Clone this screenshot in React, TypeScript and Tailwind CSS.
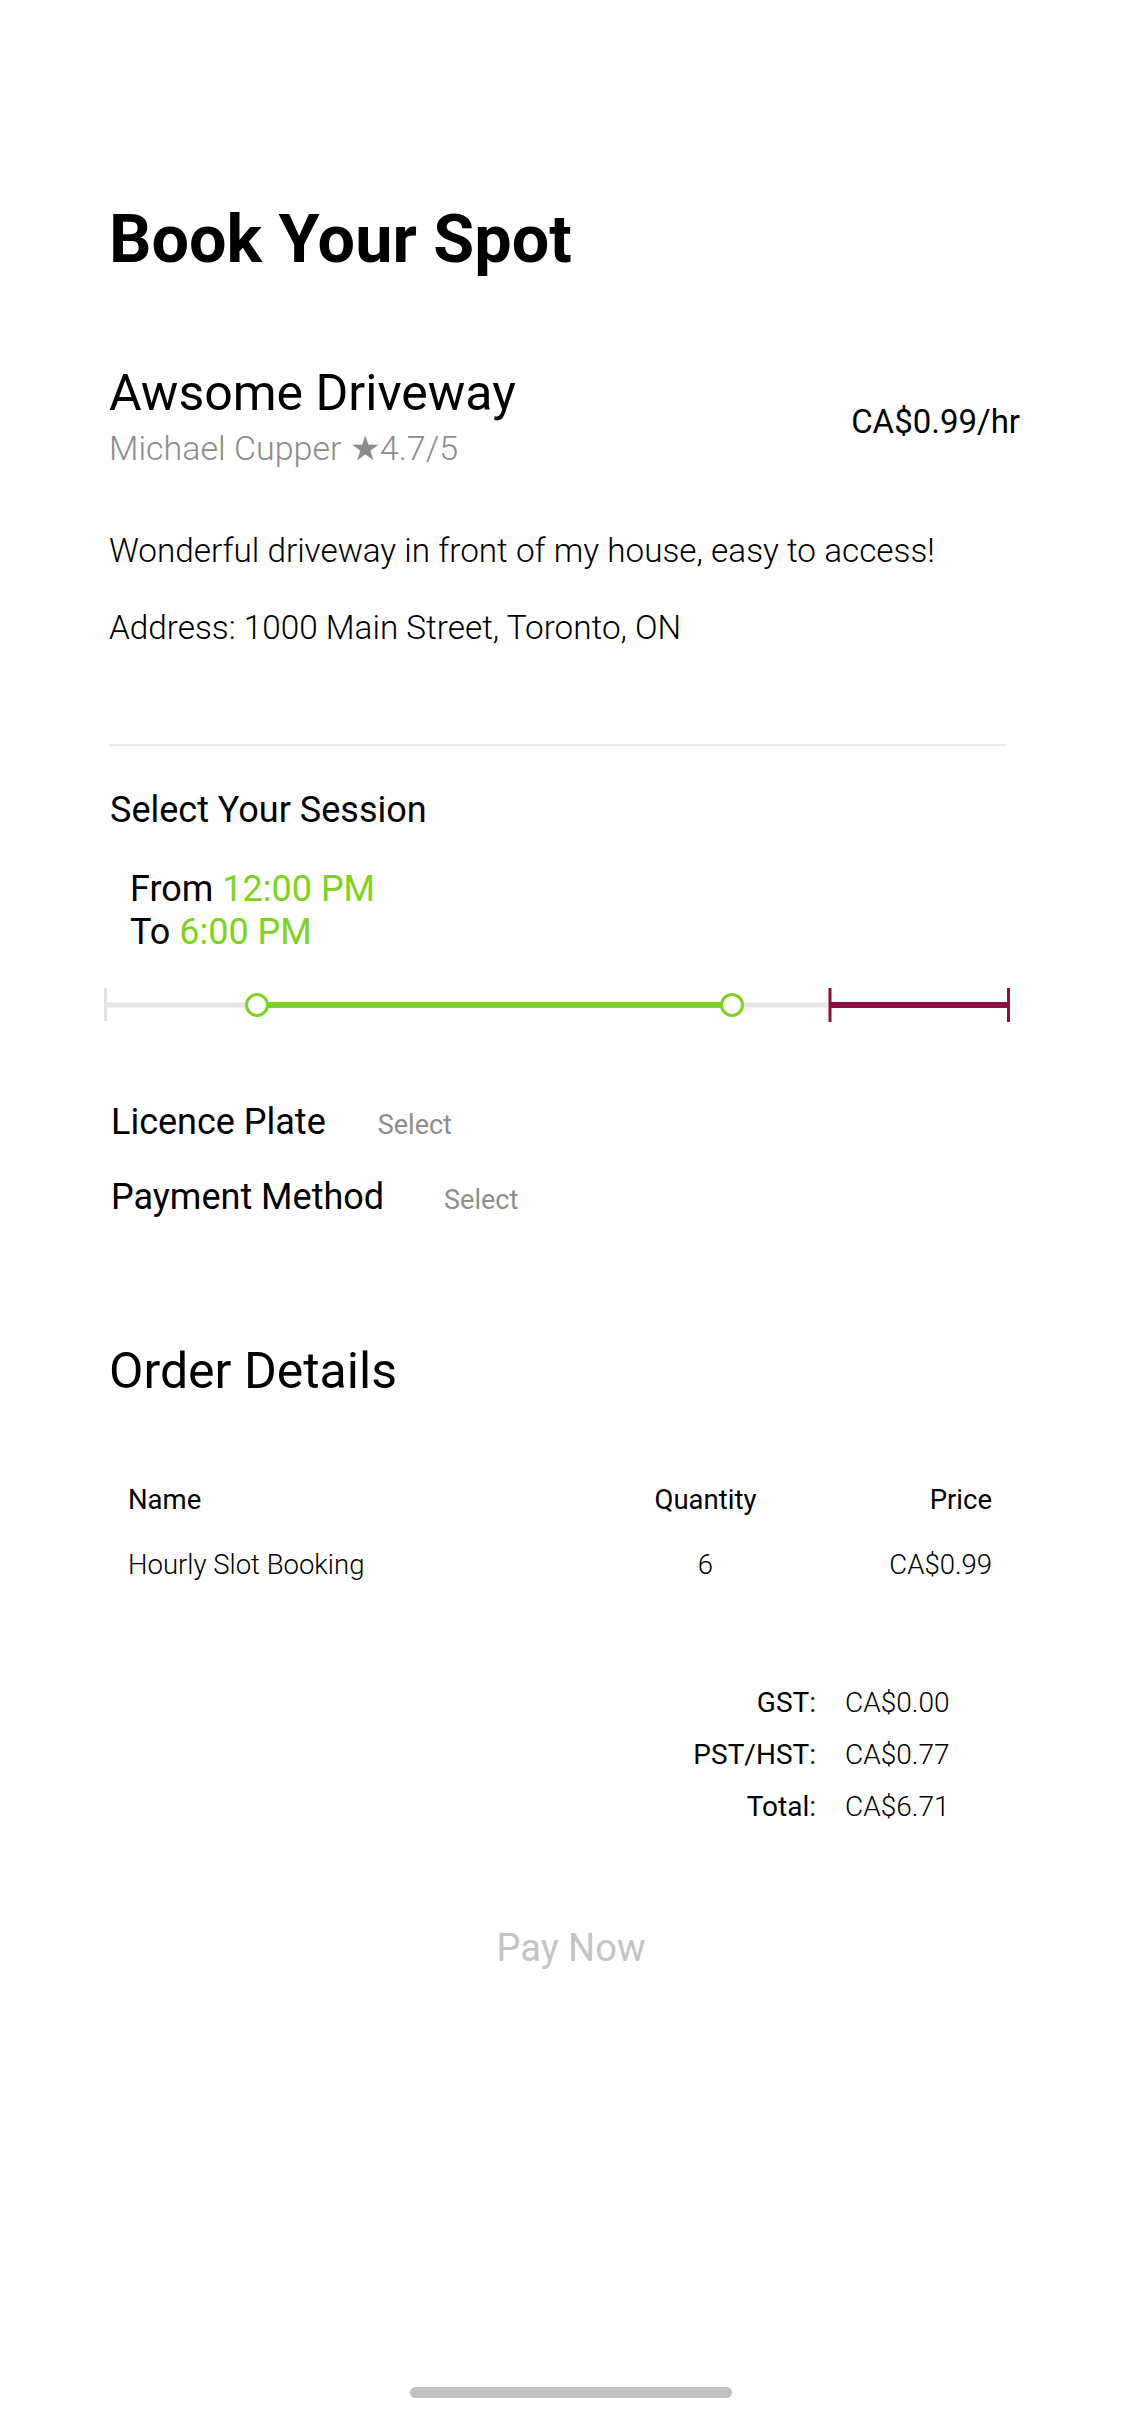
import React from 'react';

const GREEN = '#7ed321';
const MAROON = '#8b0f40';

/** Range slider drawn as svg: free gray track, chosen range in green, booked part in maroon. */
function SessionSlider() {
  return (
    <svg width={906} height={34} viewBox="0 0 906 34" className="-ml-[5px] block">
      <line x1={1.5} y1={0} x2={1.5} y2={33} stroke="#e2e2e2" strokeWidth={3} />
      <line x1={0} y1={17} x2={726} y2={17} stroke="#e6e6e6" strokeWidth={5} />
      <line x1={153} y1={17} x2={628} y2={17} stroke={GREEN} strokeWidth={6} />
      <line x1={726} y1={17} x2={904} y2={17} stroke={MAROON} strokeWidth={6} />
      <line x1={726} y1={0} x2={726} y2={34} stroke={MAROON} strokeWidth={3} />
      <line x1={904.5} y1={0} x2={904.5} y2={34} stroke={MAROON} strokeWidth={3} />
      <circle cx={153} cy={17} r={10.5} fill="#fff" stroke={GREEN} strokeWidth={3} />
      <circle cx={628} cy={17} r={10.5} fill="#fff" stroke={GREEN} strokeWidth={3} />
    </svg>
  );
}

export default function App() {
  return (
    <div className="flow-root min-h-[2409px] bg-white font-['Roboto','Liberation_Sans',sans-serif] text-black">
      <div className="pl-[109px] pr-[122px] pt-[206px]">
        <h1 className="text-[66.5px] font-bold leading-none">Book Your Spot</h1>

        <div className="mt-[95px] flex items-center justify-between">
          <div>
            <p className="text-[50px] leading-none">Awsome Driveway</p>
            <p className="mt-[13px] text-[34px] font-light leading-none text-[#8c8c8c]">
              Michael Cupper ★4.7/5
            </p>
          </div>
          <p className="mt-[11px] text-[33px] leading-none">CA$0.99/hr</p>
        </div>

        <p className="mt-[69px] text-[33.3px] font-light leading-none">
          Wonderful driveway in front of my house, easy to access!
        </p>
        <p className="mt-[44px] text-[33.3px] font-light leading-none">
          Address: 1000 Main Street, Toronto, ON
        </p>

        <div className="mt-[100px] mr-[13px] h-[2px] bg-[#ececec]" />

        <p className="mt-[46px] pl-[1px] text-[36px] leading-none">Select Your Session</p>

        <div className="mt-[43px] pl-[21px] text-[36px] leading-none">
          <p>
            From <span className="text-[#7ed321]">12:00 PM</span>
          </p>
          <p className="mt-[7px]">
            To <span className="text-[#7ed321]">6:00 PM</span>
          </p>
        </div>

        <div className="mt-[38px]">
          <SessionSlider />
        </div>

        <div className="mt-[82px] flex items-baseline gap-[52px] pl-[2px]">
          <span className="text-[36px] leading-none">Licence Plate</span>
          <span className="text-[27px] leading-none text-[#8e8e8e]">Select</span>
        </div>
        <div className="mt-[39px] flex items-baseline gap-[60px] pl-[2px]">
          <span className="text-[36px] leading-none">Payment Method</span>
          <span className="text-[27px] leading-none text-[#8e8e8e]">Select</span>
        </div>

        <h2 className="mt-[131px] text-[50px] leading-none">Order Details</h2>

        {/* tabla del pedido */}
        <div className="mt-[90px] ml-[19px] grid w-[864px] grid-cols-[526px_103px_235px] gap-y-[37px] text-[27.5px] leading-none">
          <span>Name</span>
          <span className="text-center">Quantity</span>
          <span className="text-right">Price</span>
          <span className="font-light">Hourly Slot Booking</span>
          <span className="text-center font-light">6</span>
          <span className="text-right font-light">CA$0.99</span>
        </div>

        <div className="mt-[111px] grid grid-cols-[707px_1fr] gap-x-[29px] gap-y-[24px] text-[28px] leading-none">
          <span className="text-right">GST:</span>
          <span className="font-light">CA$0.00</span>
          <span className="text-right">PST/HST:</span>
          <span className="font-light">CA$0.77</span>
          <span className="text-right">Total:</span>
          <span className="font-light">CA$6.71</span>
        </div>
      </div>

      <p className="mt-[108px] text-center text-[38px] leading-none text-[#c4c4c4]">Pay Now</p>

      <div className="mx-auto mt-[420px] h-[11px] w-[322px] rounded-full bg-[#c0c0c0]" />
    </div>
  );
}
